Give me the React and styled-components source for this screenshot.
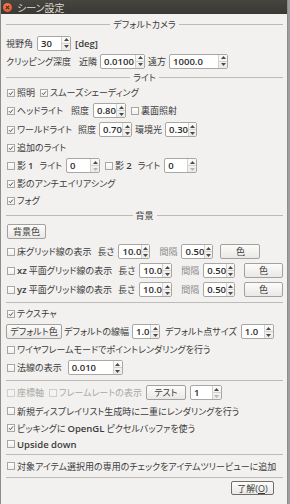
import React from "react";
import styled, { createGlobalStyle } from "styled-components";

const GlobalStyle = createGlobalStyle`
  html, body { margin: 0; padding: 0; background: #9e9e9e; }
  #root { width: 290px; height: 504px; overflow: hidden; }
`;

const Window = styled.div`
  width: 288px;
  height: 504px;
  box-sizing: border-box;
  background: #f2f1f0;
  border-left: 1px solid #8e8d8a;
  border-right: 1px solid #8e8d8a;
  display: flex;
  flex-direction: column;
  font-family: "Open Sans", "Noto Sans CJK JP", sans-serif;
  font-size: 9px;
  color: #3c3c3c;
  font-feature-settings: "palt";
`;

const TitleBar = styled.div`
  height: 14px;
  flex-shrink: 0;
  background: linear-gradient(#46453f, #393834);
  display: flex;
  align-items: center;
  gap: 5px;
  padding-left: 2px;
  color: #dfdbd2;
  font-size: 10px;
`;

const CloseButton = styled.span`
  width: 9px;
  height: 9px;
  border-radius: 50%;
  background: radial-gradient(circle at 40% 35%, #f58559, #d9471d);
  display: flex;
  align-items: center;
  justify-content: center;
`;

const Body = styled.div`
  display: flex;
  flex-direction: column;
  padding: 0 4px 0 5px;
`;

const Header = styled.div`
  height: ${(p) => p.$h}px;
  flex-shrink: 0;
  display: flex;
  align-items: center;
  gap: 3px;
  &::before,
  &::after {
    content: "";
    flex: 1;
    border-top: 1px solid #bdbbb7;
  }
`;

const Sep = styled.div`
  height: ${(p) => p.$h}px;
  flex-shrink: 0;
  display: flex;
  align-items: center;
  &::after {
    content: "";
    flex: 1;
    border-top: 1px solid #bdbbb7;
  }
`;

const Row = styled.div`
  height: ${(p) => p.$h}px;
  flex-shrink: 0;
  display: flex;
  align-items: center;
  gap: ${(p) => p.$gap ?? 4}px;
  white-space: nowrap;
`;

const Label = styled.span`
  color: ${(p) => (p.$muted ? "#8a8a8a" : p.$dis ? "#a9a8a5" : "#3c3c3c")};
  margin-left: ${(p) => p.$ml ?? 0}px;
`;

const Latin = styled.span`
  font-family: "Open Sans", sans-serif;
  font-weight: 600;
  font-size: 9.5px;
`;

const CheckWrap = styled.label`
  display: inline-flex;
  align-items: center;
  gap: 2px;
  padding-left: 1px;
  margin-left: ${(p) => p.$ml ?? 0}px;
  color: ${(p) => (p.$dis ? "#a9a8a5" : "#3c3c3c")};
`;

const Box = styled.span`
  width: 8px;
  height: 8px;
  box-sizing: border-box;
  border: 1px solid ${(p) => (p.$dis ? "#cfceca" : "#a8a6a2")};
  background: ${(p) => (p.$dis ? "#f4f3f2" : "linear-gradient(#ffffff, #efeeec)")};
  display: flex;
  align-items: center;
  justify-content: center;
`;

function Check({ on, dis, ml, children }) {
  return (
    <CheckWrap $dis={dis} $ml={ml}>
      <Box $dis={dis}>
        {on && (
          <svg width="6" height="6" viewBox="0 0 6 6">
            <path d="M1 3.2 L2.4 4.6 L5 1.4" fill="none" stroke="#3a3a3a" strokeWidth="0.9" />
          </svg>
        )}
      </Box>
      {children}
    </CheckWrap>
  );
}

const SpinBox = styled.span`
  width: ${(p) => p.$w}px;
  height: 15px;
  box-sizing: border-box;
  border: 1px solid #a9a7a3;
  border-radius: 2px;
  background: #fff;
  display: flex;
  margin-left: ${(p) => p.$ml ?? 0}px;
`;

const SpinValue = styled.span`
  flex: 1;
  padding-left: 3px;
  font-family: "Open Sans", sans-serif;
  font-weight: 600;
  font-size: 9.5px;
  line-height: 13px;
  color: #2a2a2a;
`;

const Arrows = styled.span`
  width: 8px;
  border-left: 1px solid #d3d1cd;
  background: linear-gradient(#fbfbfa, #eceae7);
  display: flex;
  flex-direction: column;
`;

const ArrowHalf = styled.span`
  flex: 1;
  display: flex;
  align-items: center;
  justify-content: center;
  & + & {
    border-top: 1px solid #d3d1cd;
  }
`;

function Tri({ down, dim }) {
  return (
    <svg width="5" height="3" viewBox="0 0 5 3">
      <path d={down ? "M0 0 H5 L2.5 3 Z" : "M0 3 H5 L2.5 0 Z"} fill={dim ? "#b9b7b3" : "#4a4a4a"} />
    </svg>
  );
}

function Spin({ w, value, ml, atMin }) {
  return (
    <SpinBox $w={w} $ml={ml}>
      <SpinValue>{value}</SpinValue>
      <Arrows>
        <ArrowHalf>
          <Tri />
        </ArrowHalf>
        <ArrowHalf>
          <Tri down dim={atMin} />
        </ArrowHalf>
      </Arrows>
    </SpinBox>
  );
}

const Button = styled.span`
  width: ${(p) => p.$w}px;
  height: ${(p) => p.$h ?? 15}px;
  box-sizing: border-box;
  border: 1px solid ${(p) => (p.$default ? "#6f6e6a" : "#a3a19d")};
  border-radius: 2px;
  background: linear-gradient(#fcfcfb, #e9e8e6);
  display: flex;
  align-items: center;
  justify-content: center;
  margin-left: ${(p) => p.$ml ?? 0}px;
  color: #3c3c3c;
`;

const Footer = styled.div`
  height: 20px;
  display: flex;
  justify-content: flex-end;
  align-items: flex-start;
  padding: 3px 9px 0 0;
`;

function GridRow({ label, lenW, ml }) {
  return (
    <Row $h={19}>
      <Check>{label}</Check>
      <Label $ml={2}>長さ</Label>
      <Spin w={lenW} value="10.0" />
      <Label $muted $ml={5}>間隔</Label>
      <Spin w={32} value="0.50" />
      <Button $w={40} $ml={ml}>色</Button>
    </Row>
  );
}

export default function App() {
  return (
    <>
      <GlobalStyle />
      <Window>
        <TitleBar>
          <CloseButton>
            <svg width="5" height="5" viewBox="0 0 5 5">
              <path d="M0.8 0.8 L4.2 4.2 M4.2 0.8 L0.8 4.2" stroke="#3a2a20" strokeWidth="1.1" />
            </svg>
          </CloseButton>
          <span>シーン設定</span>
        </TitleBar>
        <Body>
          <Header $h={20}>デフォルトカメラ</Header>
          <Row $h={18}>
            <Label>視野角</Label>
            <Spin w={34} value="30" />
            <Latin>[deg]</Latin>
          </Row>
          <Row $h={18} $gap={3}>
            <Label>クリッピング深度</Label>
            <Label $ml={5}>近隣</Label>
            <Spin w={45} value="0.0100" />
            <Label>遠方</Label>
            <Spin w={59} value="1000.0" />
          </Row>
          <Header $h={14}>ライト</Header>
          <Row $h={17}>
            <Check on>照明</Check>
            <Check on>スムーズシェーディング</Check>
          </Row>
          <Row $h={19}>
            <Check on>ヘッドライト</Check>
            <Label $ml={4}>照度</Label>
            <Spin w={33} value="0.80" />
            <Check>裏面照射</Check>
          </Row>
          <Row $h={19} $gap={3}>
            <Check on>ワールドライト</Check>
            <Label $ml={3}>照度</Label>
            <Spin w={33} value="0.70" />
            <Label>環境光</Label>
            <Spin w={32} value="0.30" />
          </Row>
          <Row $h={17}>
            <Check on>追加のライト</Check>
          </Row>
          <Row $h={19}>
            <Check>
              影 <Latin>1</Latin>
            </Check>
            <Label $ml={2}>ライト</Label>
            <Spin w={34} value="0" atMin />
            <Check>
              影 <Latin>2</Latin>
            </Check>
            <Label $ml={2}>ライト</Label>
            <Spin w={33} value="0" atMin />
          </Row>
          <Row $h={17}>
            <Check on>影のアンチエイリアシング</Check>
          </Row>
          <Row $h={17}>
            <Check on>フォグ</Check>
          </Row>
          <Header $h={12}>背景</Header>
          <Row $h={21}>
            <Button $w={39} $h={15} $ml={1}>背景色</Button>
          </Row>
          <GridRow label="床グリッド線の表示" lenW={32} ml={3} />
          <GridRow
            label={
              <>
                <Latin>xz</Latin>平面グリッド線の表示
              </>
            }
            lenW={34}
            ml={5}
          />
          <GridRow
            label={
              <>
                <Latin>yz</Latin>平面グリッド線の表示
              </>
            }
            lenW={34}
            ml={5}
          />
          <Sep $h={6} />
          <Row $h={17}>
            <Check on>テクスチャ</Check>
          </Row>
          <Row $h={19} $gap={2}>
            <Button $w={56}>デフォルト色</Button>
            <Label>デフォルトの線幅</Label>
            <Spin w={28} value="1.0" ml={1} />
            <Label $ml={3}>デフォルト点サイズ</Label>
            <Spin w={33} value="1.0" ml={2} />
          </Row>
          <Row $h={17}>
            <Check>ワイヤフレームモードでポイントレンダリングを行う</Check>
          </Row>
          <Row $h={19}>
            <Check>法線の表示</Check>
            <Spin w={55} value="0.010" ml={2} />
          </Row>
          <Sep $h={6} />
          <Row $h={19}>
            <Check dis>座標軸</Check>
            <Check dis>フレームレートの表示</Check>
            <Button $w={40}>テスト</Button>
            <Spin w={32} value="1" atMin />
          </Row>
          <Row $h={18}>
            <Check>新規ディスプレイリスト生成時に二重にレンダリングを行う</Check>
          </Row>
          <Row $h={16}>
            <Check on>
              ピッキングに<Latin>OpenGL</Latin>ピクセルバッファを使う
            </Check>
          </Row>
          <Row $h={16}>
            <Check>
              <Latin>Upside down</Latin>
            </Check>
          </Row>
          <Sep $h={4} />
          <Row $h={20}>
            <Check>対象アイテム選択用の専用のチェックをアイテムツリービューに追加</Check>
          </Row>
          <Sep $h={2} />
          <Footer>
            <Button $w={43} $h={14} $default>
              了解(<u>O</u>)
            </Button>
          </Footer>
        </Body>
      </Window>
    </>
  );
}
